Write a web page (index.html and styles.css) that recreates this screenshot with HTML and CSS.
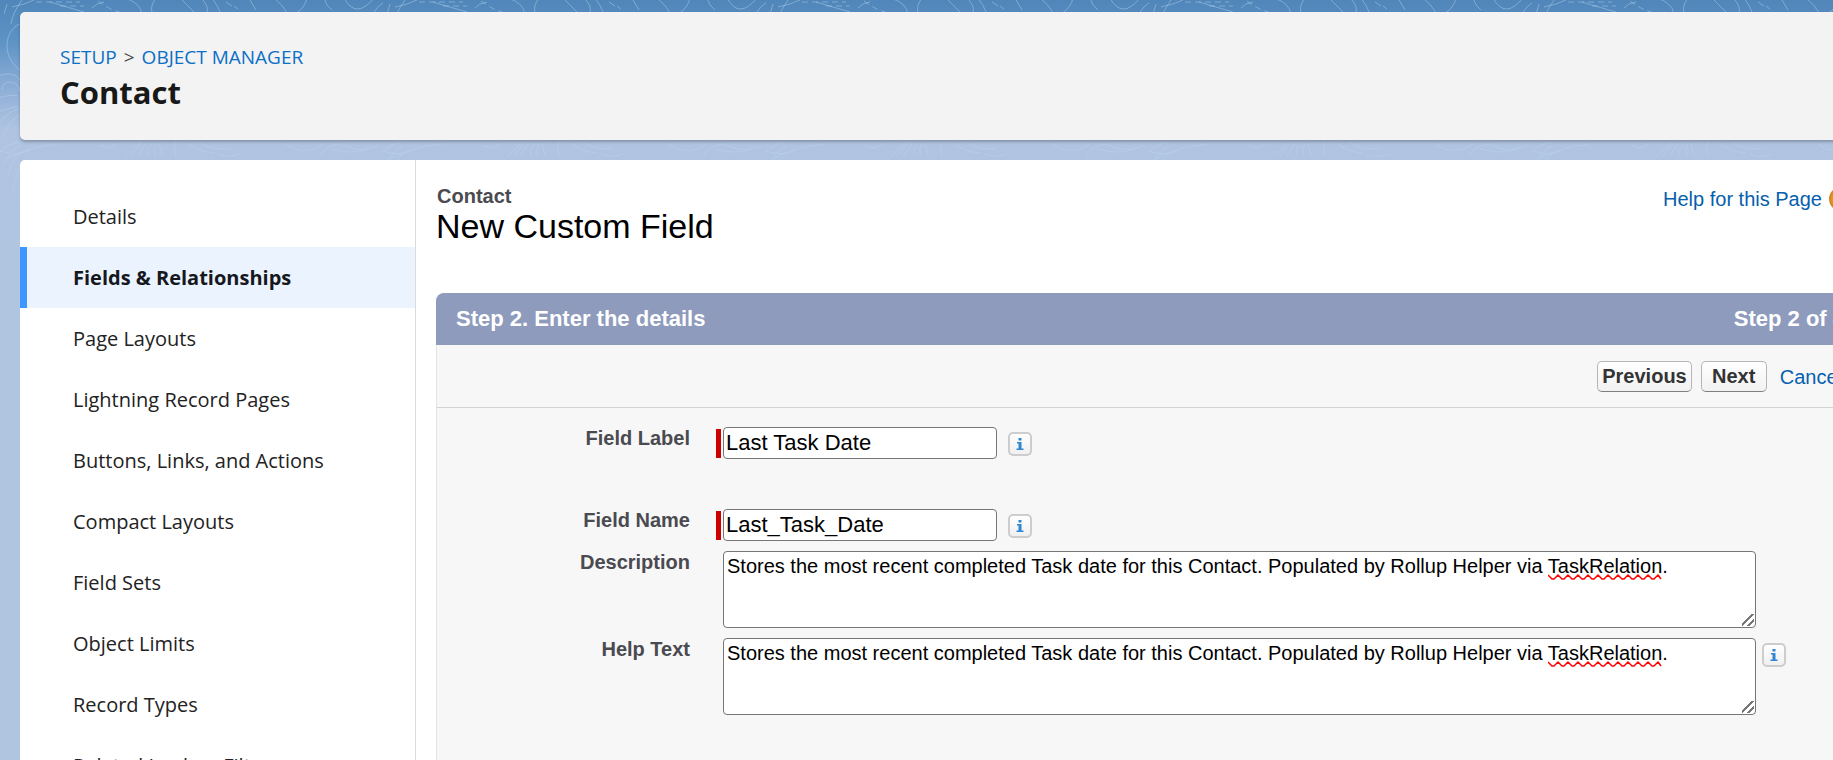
FILE: index.html
```html
<!DOCTYPE html>
<html lang="en">
<head>
<meta charset="utf-8">
<title>Contact | New Custom Field</title>
<link rel="stylesheet" href="styles.css">
</head>
<body>
<svg class="backdrop" aria-hidden="true">
  <defs>
    <pattern id="contours" width="383" height="380" patternUnits="userSpaceOnUse">
      <g fill="none" stroke="#b9d6ee" stroke-opacity=".45" stroke-width="1">
        <path d="M22 0Q12 14 11 24M34 0l-10 4-12 3M50 2q20 6 34 10M104 2q-8 1-12 6M124 -2q16 4 18 16M156-2q-6 8-4 14M180-2q6 6 14 14M201-2q8 8 6 14M212-2q6 8 8 14M226 2l6 4M234 6l4 3M250 0l6 10M274-2q8 6 14 16M295 14q10-6 12-16M324-2q2 8 8 12M344-2q12 22 30 0M374 12q16-24 42 2"/>
        <path stroke-dasharray="6 4" d="M36 2h44M98 1q10 8 24 12M60 6h24"/>
        <path d="M19 24Q8 30 7 44t12 26M4 14l3-10M-2 76q16-6 22 4M2 90q0-8 8-8t10 10M-2 98q14-4 20-2M-2 112l20-6M-2 124q10-12 22-16M2 138q8-18 18-24M-2 154q8-10 22-12M4 164q6-14 16-18M8 176q4-16 12-22M12 190l8-24"/>
        <path d="M100 145q8 6 16-1M124 157l16-15M130 157l12-15M137 157l9-14M148 156q-2-8 4-12M155 156q-3-9 2-13M162 156l-3-13M176 157q-3-8 0-16M188 143q10 9 26 10M200 142q10 8 30 7M218 154q10 5 22 0M286 144q18 14 38 0M320 156q8-13 22-12 14 10 36 2M332 149q20 6 36 0M0 151q18 6 30-1M8 158q24-12 50-14"/>
      </g>
    </pattern>
  </defs>
  <rect width="100%" height="240" fill="url(#contours)"/>
</svg>

<div class="page">
  <header class="page-header">
    <nav class="crumbs" aria-label="Breadcrumb">
      <a href="#">SETUP</a><span class="crumb-sep">&gt;</span><a href="#">OBJECT MANAGER</a>
    </nav>
    <h1 class="object-name">Contact</h1>
  </header>

  <div class="workspace">
    <nav class="sidebar" aria-label="Object settings">
      <a class="side-link" href="#">Details</a>
      <a class="side-link side-link-active" href="#" aria-current="page">Fields &amp; Relationships</a>
      <a class="side-link" href="#">Page Layouts</a>
      <a class="side-link" href="#">Lightning Record Pages</a>
      <a class="side-link" href="#">Buttons, Links, and Actions</a>
      <a class="side-link" href="#">Compact Layouts</a>
      <a class="side-link" href="#">Field Sets</a>
      <a class="side-link" href="#">Object Limits</a>
      <a class="side-link" href="#">Record Types</a>
      <a class="side-link" href="#">Related Lookup Filters</a>
    </nav>

    <main class="content">
      <div class="content-head">
        <div class="titles">
          <p class="kicker">Contact</p>
          <h2 class="title">New Custom Field</h2>
        </div>
        <a class="help-link" href="#">Help for this Page
          <svg class="help-icon" viewBox="0 0 24 24" aria-hidden="true">
            <circle cx="12" cy="12" r="11" fill="#e8941a" stroke="#d08a22" stroke-width="2"/>
            <path d="M9 9a3 3 0 1 1 4 3q-1 1-1 2M12 17v1" fill="none" stroke="#fff" stroke-width="2"/>
          </svg>
        </a>
      </div>

      <form class="wizard">
        <div class="step-bar">
          <h3 class="step-title">Step 2. Enter the details</h3>
          <span class="step-title">Step 2 of 4</span>
        </div>
        <div class="actions">
          <button class="btn" type="button">Previous</button>
          <button class="btn" type="button">Next</button>
          <a class="cancel" href="#">Cancel</a>
        </div>
        <div class="fields">
          <div class="row row-spaced">
            <label class="label" for="field-label">Field Label</label>
            <div class="control required">
              <input class="text-input" id="field-label" type="text" value="Last Task Date" required>
              <button class="info" type="button" aria-label="About Field Label"><svg class="info-glyph" viewBox="0 0 8 12" aria-hidden="true"><path d="M2.500 0h3v2.500h-3zM1 4h4.500v6.500H7.500V12H.500v-1.500H2.500v-5H1z"/></svg></button>
            </div>
          </div>
          <div class="row">
            <label class="label" for="field-name">Field Name</label>
            <div class="control required">
              <input class="text-input" id="field-name" type="text" value="Last_Task_Date" required>
              <button class="info" type="button" aria-label="About Field Name"><svg class="info-glyph" viewBox="0 0 8 12" aria-hidden="true"><path d="M2.500 0h3v2.500h-3zM1 4h4.500v6.500H7.500V12H.500v-1.500H2.500v-5H1z"/></svg></button>
            </div>
          </div>
          <div class="row">
            <label class="label" for="description">Description</label>
            <div class="control control-wide">
              <textarea class="text-area" id="description" spellcheck="false">Stores the most recent completed Task date for this Contact. Populated by Rollup Helper via TaskRelation.</textarea>
              <svg class="squiggle" viewBox="0 0 114 7" aria-hidden="true"><path d="M0 1l4 4h2l4-4l4 4h2l4-4l4 4h2l4-4l4 4h2l4-4l4 4h2l4-4l4 4h2l4-4l4 4h2l4-4l4 4h2l4-4l4 4h2l4-4l4 4h2l4-4l4 4h2l4-4l3 4"/></svg>
            </div>
          </div>
          <div class="row">
            <label class="label" for="help-text">Help Text</label>
            <div class="control control-wide">
              <textarea class="text-area" id="help-text" spellcheck="false">Stores the most recent completed Task date for this Contact. Populated by Rollup Helper via TaskRelation.</textarea>
              <svg class="squiggle" viewBox="0 0 114 7" aria-hidden="true"><path d="M0 1l4 4h2l4-4l4 4h2l4-4l4 4h2l4-4l4 4h2l4-4l4 4h2l4-4l4 4h2l4-4l4 4h2l4-4l4 4h2l4-4l4 4h2l4-4l4 4h2l4-4l4 4h2l4-4l3 4"/></svg>
            </div>
            <button class="info info-outer" type="button" aria-label="About Help Text"><svg class="info-glyph" viewBox="0 0 8 12" aria-hidden="true"><path d="M2.500 0h3v2.500h-3zM1 4h4.500v6.500H7.500V12H.500v-1.500H2.500v-5H1z"/></svg></button>
          </div>
        </div>
      </form>
    </main>
  </div>
</div>
</body>
</html>
```
FILE: styles.css
```css
* { box-sizing: border-box; }

html, body { height: 100%; }

body {
  margin: 0;
  overflow: hidden;
  background: #b0c5e0 linear-gradient(#5086ba 0, #5c92c4 40px, #86aad4 80px, #b0c4e1 130px, #b0c5e0 240px) no-repeat;
  font: 20px/24px "Liberation Sans", Arial, sans-serif;
  color: #000;
}

h1, h2, h3, p { margin: 0; }

a { color: #0560ad; text-decoration: none; }

.backdrop {
  position: absolute;
  inset: 0;
  z-index: -1;
  width: 100%;
  height: 240px;
}

.page {
  display: flex;
  flex-direction: column;
  gap: 20px;
  width: calc(100% + 52px);
  height: 100%;
  padding: 12px 0 0 20px;
}

.page-header {
  padding: 30px 40px 28px;
  border-radius: 5px;
  background: #f3f3f3;
  box-shadow: 0 2px 3px rgba(0, 0, 0, .25);
  font-family: "Open Sans", "Noto Sans", sans-serif;
}

.crumbs {
  display: flex;
  gap: 7px;
  font-size: 19px;
  line-height: 30px;
  color: #444;
}

.crumbs a { color: #0b6fc6; }

.object-name {
  font-size: 31px;
  line-height: 40px;
  color: #181818;
}

.workspace {
  display: flex;
  flex: 1;
  min-height: 0;
  overflow: hidden;
  border-radius: 5px 0 0 0;
  background: #fff;
}

.sidebar {
  display: flex;
  flex: none;
  flex-direction: column;
  width: 396px;
  padding-top: 26px;
  border-right: 1px solid #dddbda;
  font-family: "Open Sans", "Noto Sans", sans-serif;
}

.side-link {
  flex: none;
  padding: 16px 0 15px 46px;
  border-left: 7px solid transparent;
  line-height: 30px;
  color: #222;
}

.side-link-active {
  border-left-color: #3c97fe;
  background: #ebf3fe;
  font-weight: 700;
  color: #16181d;
}

.content {
  flex: 1;
  min-width: 0;
  padding: 24px 22px 0 20px;
}

.content-head {
  display: flex;
  justify-content: space-between;
  margin-bottom: 49px;
}

.kicker { padding-left: 1px; font-weight: 700; color: #4a4a50; }

.title { font-size: 34px; font-weight: 400; line-height: 36px; }

.help-link {
  display: flex;
  gap: 7px;
  align-items: center;
  height: 30px;
  padding-right: 10px;
}

.help-icon { width: 24px; height: 24px; }

.wizard {
  overflow: hidden;
  height: 100%;
  border-radius: 8px 8px 0 0;
  background: #f7f7f7;
}

.step-bar {
  display: flex;
  justify-content: space-between;
  padding: 14px 18px 14px 20px;
  background: #8e9bbd;
}

.step-title { font-size: 22px; font-weight: 700; line-height: 24px; color: #fff; }

.actions {
  display: flex;
  gap: 9px;
  align-items: center;
  justify-content: flex-end;
  padding: 16px 20px 15px;
  border: solid #e4e4e4;
  border-width: 0 1px;
  border-bottom: 1px solid #d4d4d4;
}

.btn {
  min-width: 66px;
  height: 31px;
  padding: 0 4px 2px;
  border: 1px solid #b5b5b5;
  border-bottom-color: #7f7f7f;
  border-radius: 5px;
  background: linear-gradient(#fff, #f1f1f1);
  font: 700 20px/24px "Liberation Sans", Arial, sans-serif;
  color: #333;
}

.cancel { padding-left: 4px; }

.fields {
  display: flex;
  flex-direction: column;
  gap: 10px;
  height: 100%;
  padding: 19px 107px 0 0;
  border-left: 1px solid #e4e4e4;
}

.row { display: flex; }

.row-spaced { padding-bottom: 40px; }

.label {
  flex: none;
  width: 253px;
  margin-right: 33px;
  text-align: right;
  font-weight: 700;
  line-height: 22px;
  color: #4a4a50;
}

.control {
  position: relative;
  display: flex;
  align-items: flex-start;
  gap: 11px;
}

.control-wide { flex: 1; }

.required::before {
  content: "";
  position: absolute;
  top: 2px;
  left: -7px;
  width: 5px;
  height: 29px;
  background: #c00;
}

.text-input {
  width: 274px;
  height: 32px;
  padding: 1px 2px;
  border: 1px solid #767676;
  border-radius: 4px;
  background: #fff;
  font: 22px/26px "Liberation Sans", Arial, sans-serif;
  color: #000;
}

.text-area {
  width: 100%;
  height: 77px;
  padding: 3px;
  border: 1px solid #767676;
  border-radius: 4px;
  background: #fff;
  font: 20px/23px "Liberation Sans", Arial, sans-serif;
  color: #000;
}

.text-area::-webkit-resizer {
  background: linear-gradient(135deg, transparent 7px, #777 7px 9px, transparent 9px 12px, #777 12px 14px, transparent 14px) 2px 2px / 12px 12px no-repeat;
}

.squiggle {
  position: absolute;
  top: 23px;
  left: 825px;
  width: 114px;
  height: 7px;
  fill: none;
  stroke: #f00;
  stroke-width: 1.5;
  stroke-linejoin: round;
}

.info {
  display: flex;
  align-items: center;
  justify-content: center;
  width: 24px;
  height: 24px;
  margin-top: 5px;
  padding: 0;
  border: 2px solid #cdcdcd;
  border-radius: 5px;
  background: linear-gradient(#fff, #f0f0f0);
}

.info-outer { margin-left: 6px; margin-right: -30px; }

.info-glyph { width: 8px; height: 12px; fill: #2f86d3; }
```
